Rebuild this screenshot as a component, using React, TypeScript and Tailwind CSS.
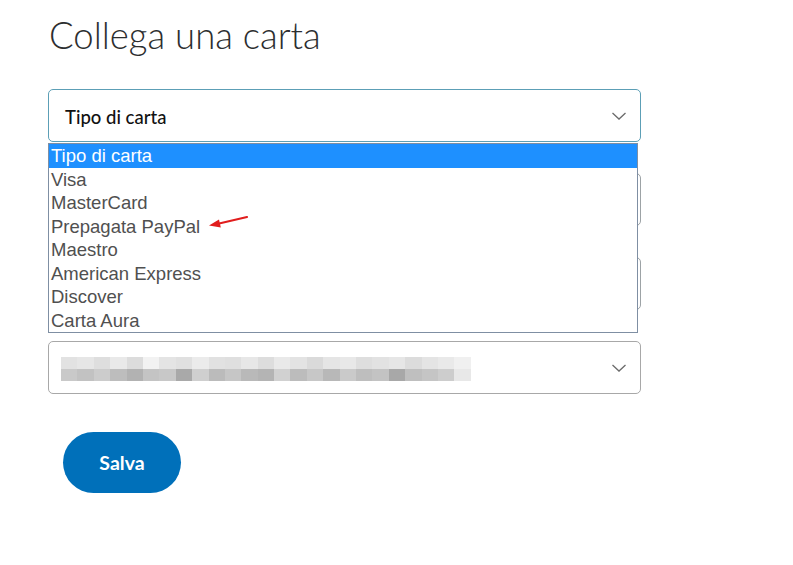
const cardTypes = ['Visa', 'MasterCard', 'Prepagata PayPal', 'Maestro', 'American Express', 'Discover', 'Carta Aura'];

// pixelated (blurred) content of the last select
const topRow = ['#e2e2e2', '#e6e6e6', '#dedede', '#e9e9e9', '#dcdcdc', '#f2f2f2', '#e4e4e4', '#e0e0e0', '#ebebeb', '#e1e1e1', '#dfdfdf', '#e7e7e7', '#dddddd', '#e9e9e9', '#e3e3e3', '#dadada', '#e5e5e5', '#e8e8e8', '#dedede', '#e2e2e2', '#e6e6e6', '#dcdcdc', '#e4e4e4', '#e9e9e9', '#f0f0f0'];
const bottomRow = ['#c9c9c9', '#c2c2c2', '#cccccc', '#bdbdbd', '#b2b2b2', '#c4c4c4', '#c8c8c8', '#a9a9a9', '#cfcfcf', '#bbbbbb', '#c6c6c6', '#b9b9b9', '#b4b4b4', '#d1d1d1', '#bcbcbc', '#c7c7c7', '#b8b8b8', '#cacaca', '#bebebe', '#c3c3c3', '#a8a8a8', '#bfbfbf', '#c5c5c5', '#cdcdcd', '#e8e8e8'];

const Chevron = () => (
  <svg width="16" height="10" viewBox="0 0 16 10" className="shrink-0">
    <path d="M1.5 2 L8 8 L14.5 2" fill="none" stroke="#6b6b6b" strokeWidth="1.3" />
  </svg>
);

const App = () => {
  return (
    <div className="w-[793px] h-[565px] bg-white overflow-hidden pl-12 pt-[12px] font-['Lato',sans-serif]">
      <h1 className="text-[36.5px] font-light text-[#2c2e2f] leading-[46px] pl-[1px]">Collega una carta</h1>

      <div className="relative w-[593px] mt-[31px] flex flex-col gap-[31px]">
        {/* Tipo di carta select */}
        <div className="h-[53px] border border-[#5c9fb6] rounded-[5px] flex items-center justify-between pl-4 pr-[13px]">
          <span className="text-[18.5px] font-medium text-[#111111] pt-[5px]">Tipo di carta</span>
          <Chevron />
        </div>
        {/* fields hidden behind the open list */}
        <div className="h-[53px] border border-[#9da3a6] rounded-[5px]" />
        <div className="h-[53px] border border-[#9da3a6] rounded-[5px]" />
        {/* last select (blurred content) */}
        <div className="h-[53px] border border-[#a8a8a8] rounded-[5px] flex items-center justify-between pl-3 pr-[13px]">
          <div className="flex flex-col pt-[2px]">
            <div className="flex">
              {topRow.map((c, i) => (
                <div key={i} className="w-[16.4px] h-[12px]" style={{ backgroundColor: c }} />
              ))}
            </div>
            <div className="flex">
              {bottomRow.map((c, i) => (
                <div key={i} className="w-[16.4px] h-[12px]" style={{ backgroundColor: c }} />
              ))}
            </div>
          </div>
          <Chevron />
        </div>

        {/* open native dropdown list */}
        <div className="absolute left-0 top-[54px] w-[590px] border border-[#7f8fa3] bg-white font-['Liberation_Sans',Arial,sans-serif]">
          <div className="h-[23.5px] leading-[23.5px] bg-[#1e90ff] text-white text-[18.5px] pl-[2px]">Tipo di carta</div>
          {cardTypes.map((t) => (
            <div key={t} className="h-[23.5px] leading-[23.5px] text-[#505050] text-[18.5px] pl-[2px]">
              {t}
            </div>
          ))}
          {/* red arrow */}
          <svg className="absolute left-[158px] top-[70px]" width="44" height="16" viewBox="0 0 44 16">
            <path d="M40 3 L10 10" stroke="#e11d1d" strokeWidth="2.2" strokeLinecap="round" />
            <path d="M2 11.5 L12 5.5 L13.8 13.5 Z" fill="#e11d1d" />
          </svg>
        </div>
      </div>

      <button className="mt-[38px] ml-[15px] w-[118px] h-[61px] rounded-full bg-[#0070ba] text-white text-[19.5px] font-bold">
        Salva
      </button>
    </div>
  );
};

export default App;
